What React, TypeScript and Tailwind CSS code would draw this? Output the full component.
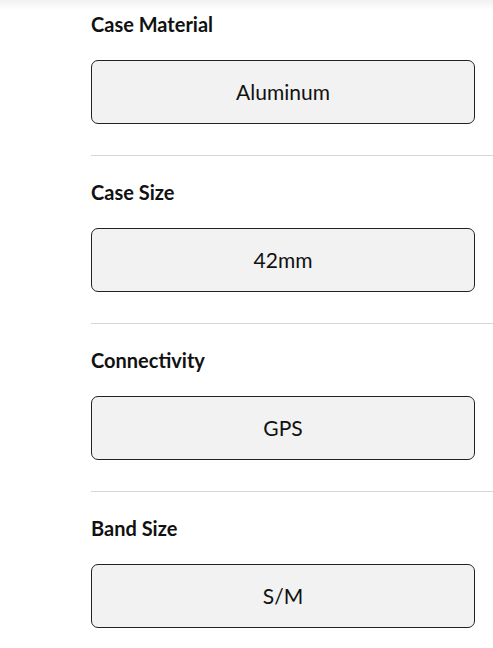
const specs = [
  { label: "Case Material", value: "Aluminum" },
  { label: "Case Size", value: "42mm" },
  { label: "Connectivity", value: "GPS" },
  { label: "Band Size", value: "S/M" },
]

const App: React.FC = (): JSX.Element => {
  return (
    <div
      className="relative min-h-[648px] bg-white text-[#111]"
      style={{ fontFamily: "Lato, 'Noto Sans', sans-serif" }}
    >
      <div className="absolute top-0 left-0 right-0 h-[10px] bg-gradient-to-b from-[#f1f1f1] to-white" />
      <div className="relative">
        {specs.map((spec, i) => (
          <div key={spec.label}>
            {i > 0 && <hr className="ml-[91px] border-0 h-px bg-[#d6d6d6]" />}
            <div className={`pl-[91px] pr-[18px] ${i === 0 ? "pt-[12px]" : "pt-[24px]"} pb-[31px]`}>
              <h3 className="h-[24px] leading-[24px] text-[20px] font-bold">{spec.label}</h3>
              <button className="mt-[24px] w-full h-[64px] flex items-center justify-center rounded-[7px] border border-[#222] bg-[#f2f2f2] text-[21px] leading-none text-[#111] pb-px">
                {spec.value}
              </button>
            </div>
          </div>
        ))}
      </div>
    </div>
  )
}

export default App
